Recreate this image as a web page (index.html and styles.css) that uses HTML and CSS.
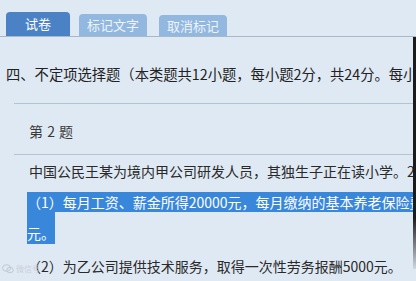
FILE: index.html
```html
<!DOCTYPE html>
<html lang="zh-CN">
<head>
<meta charset="utf-8">
<link rel="stylesheet" href="styles.css">
</head>
<body>
<div class="page">
  <div class="tabs">
    <div class="tab tab-active">试卷</div>
    <div class="tab tab-mark">标记文字</div>
    <div class="tab tab-unmark">取消标记</div>
  </div>
  <div class="heading">四、不定项选择题（本类题共12小题，每小题2分，共24分。每小题备选答案中</div>
  <div class="rule"></div>
  <div class="qnum">第 2 题</div>
  <div class="rule rule-2"></div>
  <div class="para intro">中国公民王某为境内甲公司研发人员，其独生子正在读小学。2019年王某有关收入如下：</div>
  <div class="sel-line">（1）每月工资、薪金所得20000元，每月缴纳的基本养老保险费</div>
  <div class="sel-end"><span class="sel-end-text">元。</span></div>
  <div class="para item2">（2）为乙公司提供技术服务，取得一次性劳务报酬5000元。</div>
  <div class="edge"></div>
  <div class="watermark">
    <svg class="wm-icon" width="12" height="10" viewBox="0 0 12 10"><ellipse cx="4.5" cy="4" rx="4" ry="3.3" fill="none" stroke="#b8c2cc" stroke-width="1"/><ellipse cx="8" cy="6" rx="3.3" ry="2.7" fill="none" stroke="#b8c2cc" stroke-width="1"/></svg>
    <span class="wm-text">微信号</span>
  </div>
</div>
</body>
</html>
```

FILE: styles.css
```css
html, body {
  margin: 0;
  padding: 0;
}
body {
  background: #dfe9f4;
  font-family: "Noto Sans CJK SC", "Noto Sans", sans-serif;
  color: #2e2e2e;
  width: 416px;
  height: 281px;
  overflow: hidden;
}
.page {
  position: relative;
  width: 416px;
  height: 281px;
  overflow: hidden;
}
.tabs {
  display: flex;
  align-items: flex-end;
  padding: 12px 0 0 6px;
  border-bottom: 1px solid #a9b7c6;
  height: 24px;
}
.tab {
  color: #ffffff;
  font-size: 13px;
  line-height: 21px;
  text-align: center;
  border-radius: 4px 4px 0 0;
  white-space: nowrap;
}
.tab-active {
  width: 64px;
  height: 24px;
  line-height: 24px;
  background: #4b82c6;
}
.tab-mark {
  width: 68px;
  height: 22px;
  line-height: 22px;
  margin-left: 9px;
  background: #92b8df;
  color: #eef4fb;
}
.tab-unmark {
  width: 68px;
  height: 21px;
  margin-left: 12px;
  background: #92b8df;
  color: #eef4fb;
}
.heading {
  margin-top: 27px;
  padding-left: 6px;
  font-size: 14.3px;
  line-height: 20px;
  white-space: nowrap;
  color: #222;
}
.rule {
  margin: 19px 0 0 14px;
  height: 1px;
  background: #b4c2d1;
}
.qnum {
  margin-top: 17px;
  padding-left: 29px;
  font-size: 14px;
  line-height: 20px;
  color: #3a3a3a;
  word-spacing: 1px;
}
.rule-2 {
  margin-top: 13px;
}
.para {
  font-size: 14px;
  line-height: 20px;
  white-space: nowrap;
  color: #2a2a2a;
}
.intro {
  margin-top: 6px;
  padding-left: 29px;
}
.sel-line {
  margin: 11px 0 0 27px;
  height: 20px;
  line-height: 20px;
  font-size: 14px;
  white-space: nowrap;
  background: #3987db;
  color: #ffffff;
  overflow: hidden;
}
.sel-end {
  margin-left: 27px;
  width: 28px;
  height: 32px;
  background: #3987db;
  display: flex;
  align-items: flex-end;
}
.sel-end-text {
  color: #ffffff;
  font-size: 14px;
  line-height: 22px;
  white-space: nowrap;
}
.item2 {
  margin-top: 12px;
  padding-left: 27px;
}
.edge {
  position: absolute;
  right: 0;
  top: 37px;
  width: 3px;
  height: 232px;
  background: linear-gradient(#1c1c1c 0%, #1c1c1c 78%, #cfd7df 100%);
}
.watermark {
  position: absolute;
  left: 2px;
  bottom: 7px;
  display: flex;
  align-items: center;
  gap: 2px;
  opacity: 0.8;
}
.wm-text {
  font-size: 8px;
  color: #c3ccd5;
  line-height: 10px;
}
```
